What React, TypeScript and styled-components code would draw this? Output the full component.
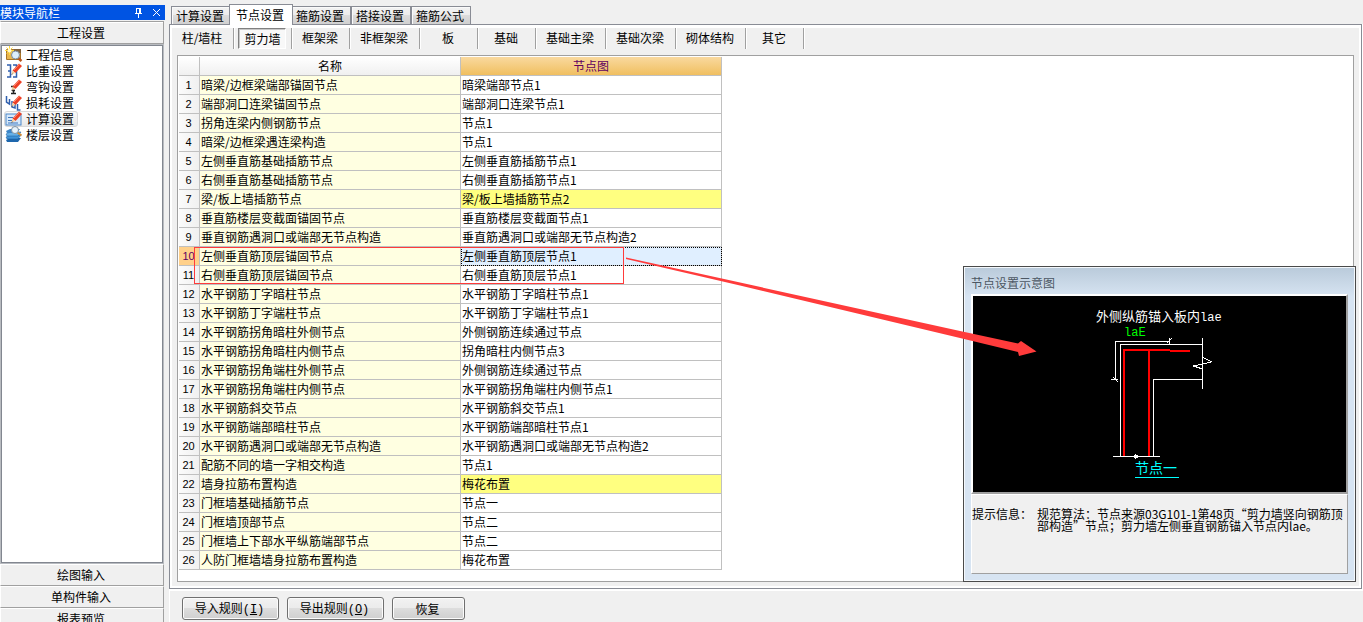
import React from 'react';
import styled, { createGlobalStyle, css } from 'styled-components';

const GlobalStyle = createGlobalStyle`
  *, *::before, *::after { box-sizing: border-box; }
  body {
    margin: 0;
    background: #f0f0f0;
    color: #000;
    font: 12px/16px "Noto Sans CJK SC", "Liberation Sans", sans-serif;
    overflow: hidden;
  }
  button { font: inherit; color: inherit; padding: 0; margin: 0; white-space: nowrap; }
`;

const Page = styled.div`
  position: relative;
  display: flex;
  height: 100vh;
  padding-top: 4px;
`;

/* ---------- navigation column ---------- */

const Sidebar = styled.aside`
  flex: none;
  width: 165px;
  display: flex;
  flex-direction: column;
  padding-top: 1px;
`;

const SidebarTitle = styled.header`
  flex: none;
  display: flex;
  align-items: center;
  height: 15px;
  background: #0054e3;
  color: #fff;
`;

const TitleText = styled.h1`
  flex: 1;
  margin: 0;
  font-size: 12px;
  font-weight: 400;
  line-height: 15px;
`;

const TitleButton = styled.button`
  width: 18px;
  height: 15px;
  border: 0;
  background: none;
  display: grid;
  place-items: center;
`;

const SectionButton = styled.button`
  flex: none;
  height: 22px;
  width: 164px;
  padding-right: 2px;
  border: 1px solid #a0a0a0;
  border-top-color: #fff;
  border-left-color: #fff;
  background: #f0f0f0;
`;

const TopSection = styled(SectionButton)`
  margin-top: 1px;
  height: 23px;
  border-top-color: #a0a0a0;
  box-shadow: inset 0 1px #fff;
`;

const ModuleList = styled.ul`
  flex: 1;
  min-height: 0;
  width: 162px;
  margin: 1px 0 1px 1px;
  padding: 1px 2px;
  list-style: none;
  background: #fff;
  border: 1px solid #828790;
  box-shadow: 0 0 0 1px #b8bbc0;
  overflow: hidden;
`;

const ModuleItem = styled.button<{ $selected?: boolean }>`
  display: flex;
  align-items: center;
  gap: 4px;
  height: 16px;
  padding: 0 3px 0 1px;
  border: 1px solid transparent;
  border-radius: 3px;
  background: none;
  ${p => p.$selected && css`
    border-color: #d9d9d9;
    background: linear-gradient(#fafafa, #e8e8e8);
  `}
`;

const BottomSections = styled.nav`
  flex: none;
  height: 58px;
  display: flex;
  flex-direction: column;
  overflow: hidden;
`;

/* ---------- main area ---------- */

const Main = styled.main`
  flex: 1;
  min-width: 0;
  display: flex;
  flex-direction: column;
  padding-left: 4px;
`;

const TabStrip = styled.div`
  flex: none;
  display: flex;
  align-items: flex-end;
  height: 20px;
  padding-left: 2px;
`;

const Tab = styled.button<{ $active?: boolean }>`
  width: ${p => (p.$active ? 64 : 60)}px;
  height: ${p => (p.$active ? 21 : 18)}px;
  margin: ${p => (p.$active ? '0 -2px -1px' : '0')};
  padding-right: 2px;
  position: relative;
  z-index: ${p => (p.$active ? 1 : 0)};
  border: 1px solid #898c95;
  border-bottom: 0;
  background: ${p => (p.$active ? '#fff' : 'linear-gradient(#f3f3f3 0, #ebebeb 50%, #dcdcdc 50%, #d0d0d0)')};
  box-shadow: ${p => (p.$active ? 'none' : 'inset 1px 1px #fafafa')};
  & + & { border-left-width: ${p => (p.$active ? 1 : 0)}px; }
`;

const Panel = styled.section`
  flex: 1;
  min-height: 0;
  display: flex;
  flex-direction: column;
  margin-right: 1px;
  border: 1px solid #898c95;
  box-shadow: inset 2px 3px #fff, inset -2px -2px #fff, 1px 0 #fff;
  padding: 3px 7px 6px 2px;
`;

const ToolBar = styled.div`
  flex: none;
  display: flex;
  height: 21px;
  margin-bottom: 6px;
`;

const ToolCell = styled.div<{ $width: number }>`
  flex: none;
  width: ${p => p.$width}px;
  display: flex;
  justify-content: center;
  padding-right: 1px;
  border-right: 1px solid #a0a0a0;
  box-shadow: 1px 0 #fff;
`;

const ToolButton = styled.button<{ $pressed?: boolean }>`
  height: 20px;
  width: ${p => (p.$pressed ? '48px' : 'auto')};
  border: 0;
  background: none;
  ${p => p.$pressed && css`
    height: 21px;
    border: 1px solid #fff;
    border-top-color: #808080;
    border-left-color: #808080;
    background: #f8f8f8;
    box-shadow: inset 1px 1px #c8c8c8;
    padding: 1px 0 0 1px;
  `}
`;

const Sheet = styled.div`
  flex: 1;
  min-height: 0;
  margin-left: 5px;
  padding: 1px;
  border: 1px solid #a0a0a0;
  background: #fff;
  overflow: hidden;
`;

const Grid = styled.table`
  table-layout: fixed;
  width: 543px;
  border-collapse: separate;
  border-spacing: 0;
  th, td {
    height: 19px;
    padding: 0 1px;
    line-height: 16px;
    font-weight: 400;
    text-align: left;
    border-right: 1px solid #c0c0c0;
    border-bottom: 1px solid #c0c0c0;
    white-space: nowrap;
    overflow: hidden;
  }
`;

const NumberCol = styled.col`width: 21px;`;
const TextCol = styled.col`width: 261px;`;

const ColumnHead = styled.th<{ $active?: boolean }>`
  && { text-align: center; }
  background: ${p => (p.$active ? 'linear-gradient(#f9d99f, #f0bf60)' : 'linear-gradient(#fff, #f0f0f0)')};
  color: ${p => (p.$active ? '#600060' : '#000')};
`;

const RowHead = styled.th<{ $active?: boolean }>`
  && {
    padding: 0 1px 0 0;
    text-align: center;
    font-family: "Liberation Sans", sans-serif;
    font-size: 11px;
  }
  background: ${p => (p.$active ? '#ffd08a' : 'linear-gradient(90deg, #fbfbfb, #f0f0f0)')};
  color: ${p => (p.$active ? '#600060' : '#000')};
`;

const NameCell = styled.td`background: #ffffe1;`;

const ValueCell = styled.td<{ $state?: string }>`
  background: ${p => (p.$state === 'changed' ? '#ffff80' : p.$state === 'focus' ? '#e0efff' : '#fff')};
  outline: ${p => (p.$state === 'focus' ? '1px dotted #000' : 'none')};
  outline-offset: -1px;
`;

const Footer = styled.footer`
  flex: none;
  display: flex;
  gap: 8px;
  height: 33px;
  padding: 6px 12px 0;
  border-top: 2px solid #fff;
  border-left: 1px solid #fff;
`;

const PushButton = styled.button<{ $wide?: boolean }>`
  width: ${p => (p.$wide ? 97 : 73)}px;
  height: 23px;
  padding-right: 2px;
  border: 1px solid #707070;
  border-radius: 3px;
  background: linear-gradient(#f2f2f2 0, #ebebeb 50%, #dddddd 50%, #cfcfcf);
  box-shadow: inset 0 0 0 1px #fcfcfc;
`;

const Mnemonic = styled.span`
  font-family: "Liberation Mono", monospace;
`;

/* ---------- floating preview window ---------- */

const PreviewWindow = styled.section`
  position: absolute;
  top: 266px;
  right: 7px;
  width: 393px;
  display: flex;
  flex-direction: column;
  padding: 8px 7px 7px;
  border: 1px solid #4a4a4a;
  box-shadow: inset 0 0 0 1px #f4f8fc;
  background: linear-gradient(#b9cada 0, #d7e4f2 30px);
`;

const PreviewTitle = styled.h2`
  margin: 0 0 3px;
  font-size: 12px;
  line-height: 16px;
  font-weight: 400;
  color: #4c5763;
`;

const Drawing = styled.svg`
  display: block;
  width: 100%;
  height: 200px;
  background: #000;
  border: 2px solid #fff;
  border-right-color: #a0a0a0;
  border-bottom-color: #a0a0a0;
`;

const Hint = styled.dl`
  display: flex;
  height: 80px;
  margin: 0;
  padding: 13px 0 0;
  line-height: 12px;
  background: #f0f0f0;
  border: 1px solid #a0a0a0;
  border-top-color: #fff;
  border-left-color: #fff;
  dt { flex: none; width: 65px; }
  dd { margin: 0; white-space: nowrap; }
`;

const Annotation = styled.svg`
  position: absolute;
  top: 0;
  left: 0;
  width: 1040px;
  height: 360px;
  pointer-events: none;
`;

/* ---------- icons ---------- */

const Glyph = styled.svg`
  flex: none;
  width: 16px;
  height: 16px;
  overflow: visible;
`;

const Pencil = () => (
  <g>
    <path d="M6.500 7.500 13 .5 16 3 9.500 10Z" fill="#ee3f24" />
    <path d="M8 7 13.500 1.200" stroke="#ff8a70" />
    <path d="M6.500 7.500 9.500 10 5.500 11.500Z" fill="#f3cfa0" />
    <path d="M6 10.500 7 11 5 12Z" fill="#444" />
  </g>
);

const icons: Record<string, React.ReactNode> = {
  info: (
    <>
      <rect x="0" y="2" width="15" height="11" rx="1" fill="#a87426" />
      <rect x="1" y="3" width="13" height="9" fill="#eab64c" />
      <path d="M8 2h7v4H8z" fill="#80603a" />
      <path d="M3.500-1v9M-1 3.500h9M.5.5l6 6M6.500.5l-6 6" stroke="#ffd83c" />
      <circle cx="3.500" cy="3.500" r="2" fill="#fff9ca" />
      <path d="m12 11 3.500 3" stroke="#b5561f" strokeWidth="2.500" />
      <circle cx="9.500" cy="8" r="4" fill="#dceefc" stroke="#7b8b9c" />
    </>
  ),
  weight: (
    <>
      <path d="M1 2h3.500v12H1M7 2h3.500v12H7M2 8h2M8 8h2" fill="none" stroke="#2f5fae" strokeWidth="1.500" />
      <Pencil />
    </>
  ),
  hook: (
    <>
      <path d="M5 7.500h5M7.500 7.500v7M5 14.500h5M6 11.500h3" fill="none" stroke="#222" strokeWidth="1.500" />
      <Pencil />
    </>
  ),
  loss: (
    <>
      <path d="M.5 1v6l3 2V4M6 6v6l3 1V9M11.500 9v6h3" fill="none" stroke="#2f5fae" strokeWidth="1.500" />
      <Pencil />
    </>
  ),
  calc: (
    <>
      <rect x="0" y="3" width="15" height="11" fill="#d6e8fa" stroke="#4c87c8" />
      <path d="M2 6.500h5M2 9.500h4M2 12h10" stroke="#3d77bd" />
      <Pencil />
    </>
  ),
  floor: (
    <>
      <path d="m0 13 4-2h11l-3 4H1z" fill="#1e67ad" />
      <path d="m0 10 4-2h11l-3 4H1z" fill="#3f93d8" stroke="#14589b" strokeWidth=".5" />
      <path d="m0 7 4-2h11l-3 4H1z" fill="#64b0e8" stroke="#14589b" strokeWidth=".5" />
      <path d="m0 4 4-2h10l-3 4H1z" fill="#3c86c9" />
      <path d="m11.500 5.500 4 3" stroke="#d48c35" strokeWidth="2" />
      <circle cx="9" cy="3" r="3.500" fill="#e7f4fd" stroke="#8092a3" />
    </>
  ),
};

/* ---------- data ---------- */

const modules = [
  ['info', '工程信息'],
  ['weight', '比重设置'],
  ['hook', '弯钩设置'],
  ['loss', '损耗设置'],
  ['calc', '计算设置'],
  ['floor', '楼层设置'],
];

const tabs = ['计算设置', '节点设置', '箍筋设置', '搭接设置', '箍筋公式'];

const members: [string, number][] = [
  ['柱/墙柱', 62],
  ['剪力墙', 58],
  ['框架梁', 58],
  ['非框架梁', 70],
  ['板', 58],
  ['基础', 58],
  ['基础主梁', 70],
  ['基础次梁', 70],
  ['砌体结构', 70],
  ['其它', 58],
];

const rows: [string, string, string?][] = [
  ['暗梁/边框梁端部锚固节点', '暗梁端部节点1'],
  ['端部洞口连梁锚固节点', '端部洞口连梁节点1'],
  ['拐角连梁内侧钢筋节点', '节点1'],
  ['暗梁/边框梁遇连梁构造', '节点1'],
  ['左侧垂直筋基础插筋节点', '左侧垂直筋插筋节点1'],
  ['右侧垂直筋基础插筋节点', '右侧垂直筋插筋节点1'],
  ['梁/板上墙插筋节点', '梁/板上墙插筋节点2', 'changed'],
  ['垂直筋楼层变截面锚固节点', '垂直筋楼层变截面节点1'],
  ['垂直钢筋遇洞口或端部无节点构造', '垂直筋遇洞口或端部无节点构造2'],
  ['左侧垂直筋顶层锚固节点', '左侧垂直筋顶层节点1', 'focus'],
  ['右侧垂直筋顶层锚固节点', '右侧垂直筋顶层节点1'],
  ['水平钢筋丁字暗柱节点', '水平钢筋丁字暗柱节点1'],
  ['水平钢筋丁字端柱节点', '水平钢筋丁字端柱节点1'],
  ['水平钢筋拐角暗柱外侧节点', '外侧钢筋连续通过节点'],
  ['水平钢筋拐角暗柱内侧节点', '拐角暗柱内侧节点3'],
  ['水平钢筋拐角端柱外侧节点', '外侧钢筋连续通过节点'],
  ['水平钢筋拐角端柱内侧节点', '水平钢筋拐角端柱内侧节点1'],
  ['水平钢筋斜交节点', '水平钢筋斜交节点1'],
  ['水平钢筋端部暗柱节点', '水平钢筋端部暗柱节点1'],
  ['水平钢筋遇洞口或端部无节点构造', '水平钢筋遇洞口或端部无节点构造2'],
  ['配筋不同的墙一字相交构造', '节点1'],
  ['墙身拉筋布置构造', '梅花布置', 'changed'],
  ['门框墙基础插筋节点', '节点一'],
  ['门框墙顶部节点', '节点二'],
  ['门框墙上下部水平纵筋端部节点', '节点二'],
  ['人防门框墙墙身拉筋布置构造', '梅花布置'],
];

const NodeDrawing = () => (
  <Drawing role="img" aria-label="节点一">
    <g fontFamily='"Liberation Mono", "Noto Sans CJK SC", monospace' fontSize="12">
      <text x="123" y="25" fill="#fff">
        <tspan fontSize="13">外侧纵筋锚入板内</tspan>lae
      </text>
      <text x="151" y="40" fill="#0f0">laE</text>
      <text x="162" y="177" fill="#0ff" fontSize="14">节点一</text>
    </g>
    <path d="M162 181.500h44" stroke="#0ff" />
    <g fill="none" stroke="#fff" shapeRendering="crispEdges">
      <path d="M142.500 83V45.500H196.500M196.500 42v6M138 83.500h7M194 47l5-5M140 81l5 5" />
      <path d="M147.500 160V48.500H229.500M180.500 160V83.500H229.500M140 160.500h47" />
      <path d="M229.500 42v51" />
      <path d="M229.500 61l9 5-18 4 9 3" />
      <path d="M160 160.500h5M162.500 158v5" />
      <path d="M161 159h3v2h-3z" />
    </g>
    <path d="M151 160V54H197M197 55h20M176 160V54" fill="none" stroke="#f00" strokeWidth="2" shapeRendering="crispEdges" />
  </Drawing>
);

export default function App() {
  return (
    <>
      <GlobalStyle />
      <Page>
        <Sidebar>
          <SidebarTitle>
            <TitleText>模块导航栏</TitleText>
            <TitleButton aria-label="固定">
              <svg width="9" height="11" fill="none" stroke="#fff" shapeRendering="crispEdges">
                <path d="M2.500 6V1.500h4V6M5.500 1v5M1 6.500h7M4.500 7v4" />
              </svg>
            </TitleButton>
            <TitleButton aria-label="关闭">
              <svg width="9" height="9" fill="none" stroke="#fff">
                <path d="m1 1 7 7M8 1 1 8" />
              </svg>
            </TitleButton>
          </SidebarTitle>
          <TopSection>工程设置</TopSection>
          <ModuleList>
            {modules.map(([icon, label]) => (
              <li key={icon}>
                <ModuleItem $selected={icon === 'calc'}>
                  <Glyph viewBox="0 0 16 16">{icons[icon]}</Glyph>
                  {label}
                </ModuleItem>
              </li>
            ))}
          </ModuleList>
          <BottomSections>
            <SectionButton>绘图输入</SectionButton>
            <SectionButton>单构件输入</SectionButton>
            <SectionButton>报表预览</SectionButton>
          </BottomSections>
        </Sidebar>

        <Main>
          <TabStrip role="tablist">
            {tabs.map((t, i) => (
              <Tab key={t} role="tab" aria-selected={i === 1} $active={i === 1}>{t}</Tab>
            ))}
          </TabStrip>
          <Panel>
            <ToolBar>
              {members.map(([label, width], i) => (
                <ToolCell key={label} $width={width}>
                  <ToolButton $pressed={i === 1}>{label}</ToolButton>
                </ToolCell>
              ))}
            </ToolBar>
            <Sheet>
              <Grid>
                <colgroup>
                  <NumberCol />
                  <TextCol />
                  <TextCol />
                </colgroup>
                <thead>
                  <tr>
                    <ColumnHead />
                    <ColumnHead>名称</ColumnHead>
                    <ColumnHead $active>节点图</ColumnHead>
                  </tr>
                </thead>
                <tbody>
                  {rows.map(([name, value, state], i) => (
                    <tr key={name}>
                      <RowHead scope="row" $active={state === 'focus'}>{i + 1}</RowHead>
                      <NameCell>{name}</NameCell>
                      <ValueCell $state={state}>{value}</ValueCell>
                    </tr>
                  ))}
                </tbody>
              </Grid>
            </Sheet>
          </Panel>
          <Footer>
            <PushButton $wide>导入规则<Mnemonic>(<u>I</u>)</Mnemonic></PushButton>
            <PushButton $wide>导出规则<Mnemonic>(<u>O</u>)</Mnemonic></PushButton>
            <PushButton>恢复</PushButton>
          </Footer>
        </Main>

        <PreviewWindow>
          <PreviewTitle>节点设置示意图</PreviewTitle>
          <NodeDrawing />
          <Hint>
            <dt>提示信息：</dt>
            <dd>
              规范算法：节点来源03G101-1第48页“剪力墙竖向钢筋顶
              <br />
              部构造”节点；剪力墙左侧垂直钢筋锚入节点内lae。
            </dd>
          </Hint>
        </PreviewWindow>

        <Annotation aria-hidden="true">
          <rect x="194.500" y="247.500" width="429" height="36" fill="none" stroke="#ff3b3b" />
          <path d="M626 257.500 960 331 1018 343.500 1021 341 1036.500 351.500 1019 356 1018 352 960 338 740 285.500 626 259Z" fill="#ff3b3b" />
        </Annotation>
      </Page>
    </>
  );
}
